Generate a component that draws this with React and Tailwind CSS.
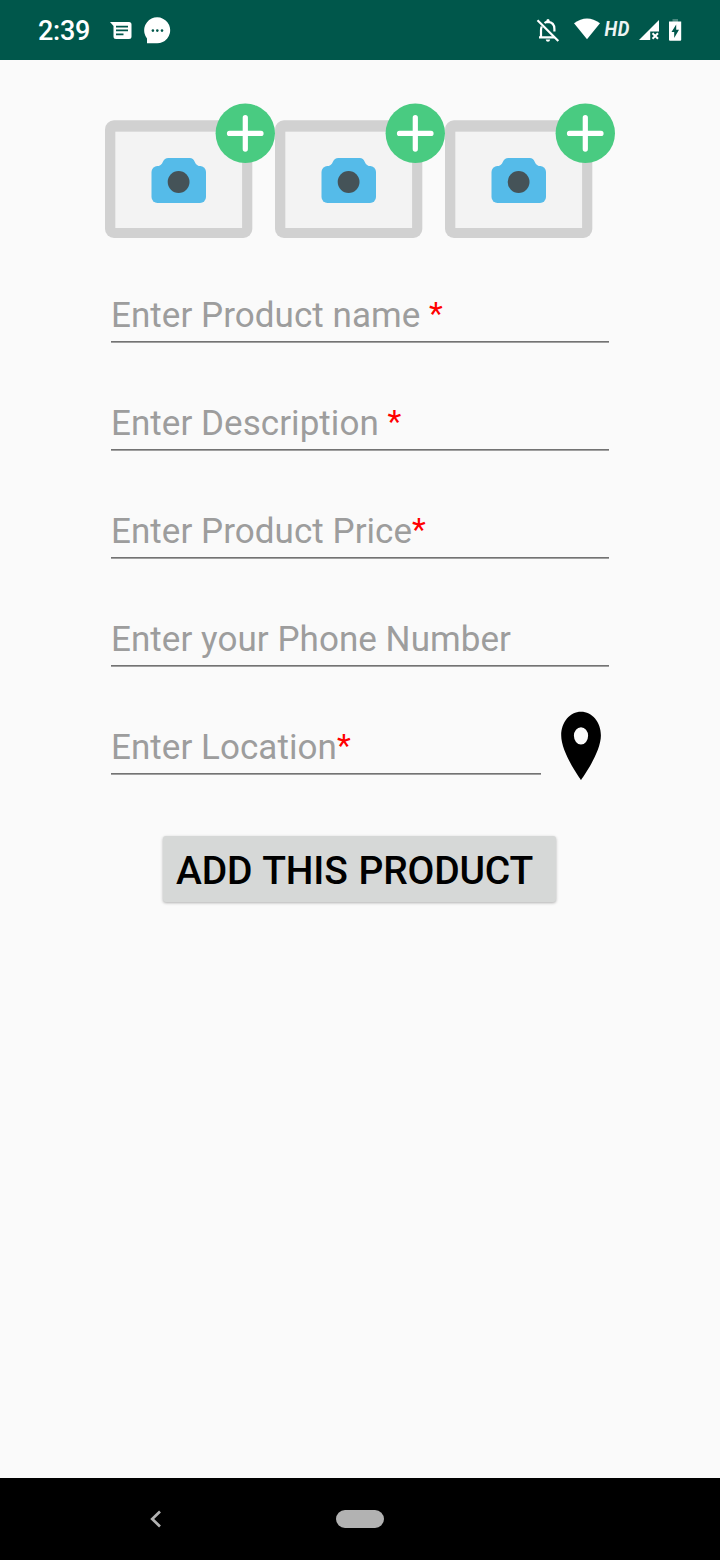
function PhotoSlot() {
  return (
    <button type="button" aria-label="Add photo" className="block h-[136px] w-[170px]">
      <svg width="170" height="136" viewBox="0 0 170 136">
        <rect x="0" y="17.300" width="147.300" height="117.700" rx="9" fill="#d1d1d1" />
        <rect x="10.300" y="28.700" width="126.800" height="96.300" fill="#f3f3f3" />
        <path
          d="M52 63.300q4.500-.300 6-4.300 1.700-4 5.500-4H85q3.500 0 5 4 1.500 4 6 4.300v2H52Z"
          transform="translate(-.200 0)"
          fill="#55bbe9"
        />
        <rect x="46.500" y="63" width="54.500" height="37" rx="6" fill="#55bbe9" />
        <circle cx="73.600" cy="79" r="10.900" fill="#455358" />
        <circle cx="140.300" cy="30.300" r="29.700" fill="#49cb81" />
        <path d="M124.500 30.400h31.500M140.300 14.500v31.600" stroke="#fff" strokeWidth="5.200" strokeLinecap="round" />
      </svg>
    </button>
  );
}

function Field({ label, required, narrow }) {
  return (
    <div className={`${narrow ? "w-[430px]" : "w-[498px]"} flex h-[108px] shrink-0 flex-col justify-end`}>
      <div className="mb-[3px] h-[44px] whitespace-pre text-[35px] leading-[44px] tracking-[0.050px] text-[#9d9d9d]">
        {label}
        {required && <span className="align-[3px] text-[32px] leading-none text-[#ff0000]">*</span>}
      </div>
      <div className="h-[2px] border-t border-[#737373] bg-[#a0a0a0]" />
    </div>
  );
}

function StatusBar() {
  return (
    <header className="flex h-[60px] shrink-0 items-center bg-[#00574b] pl-[38px] text-white">
      <span className="w-[72px] pt-[2px] text-[27px] font-medium leading-[32px] tracking-[-0.250px]">2:39</span>
      <svg width="22" height="20" viewBox="0 0 22 20" fill="none">
        <path d="M0 2h19q2.500 0 2.500 2.500v12q0 2.500-2.500 2.500H6q-2.500 0-2.500-2.500V6Z" fill="#fff" />
        <path d="M6 6.600h12M6 10.400h12M6 14.300h7.500" stroke="#00574b" strokeWidth="1.800" />
      </svg>
      <svg className="ml-[12px]" width="27" height="27" viewBox="0 0 27 27">
        <path d="M3 26.300V21.400A13 13 0 1 1 13 26.300Z" fill="#fff" />
        <g fill="#00574b">
          <circle cx="8.900" cy="13.600" r="1.300" />
          <circle cx="13.300" cy="13.600" r="1.300" />
          <circle cx="18" cy="13.600" r="1.300" />
        </g>
      </svg>
      <div className="ml-auto flex items-center pr-[38px]">
        <svg width="24" height="26" viewBox="0 0 24 26" fill="none">
          <path
            d="M5.800 9.500Q5 11 5 13v7M3 20.300h15.500M8.500 6q1.500-1.200 3.500-1.200 6.400.4 6.400 7.200v2.500"
            stroke="#fff"
            strokeWidth="2.200"
          />
          <path d="M10.400 5V3.600a1.600 1.600 0 0 1 3.200 0V5ZM9.700 22.500h4.500q-.4 2.200-2.250 2.200T9.700 22.500Z" fill="#fff" />
          <path d="M1.500 3.300 22.300 24" stroke="#fff" strokeWidth="2.200" />
        </svg>
        <svg className="ml-[13px]" width="28" height="24" viewBox="0 0 28 24">
          <path d="M1 5.300Q14-4.500 27 5.300L14 21.200Z" fill="#fff" />
        </svg>
        <span className="w-[38px] origin-left scale-x-[0.880] pb-[2px] pl-[4px] text-[21px] font-bold italic leading-[24px] tracking-[0.600px] text-[#edf3f2]">
          HD
        </span>
        <svg width="21" height="22" viewBox="0 0 21 22" fill="none">
          <path d="M0 21 20 1v11.500h-8.800V21Z" fill="#fff" />
          <path d="m13.500 14.300 5.500 5.500m0-5.500-5.500 5.500" stroke="#fff" strokeWidth="2" />
        </svg>
        <svg className="ml-[9px]" width="13" height="24" viewBox="0 0 13 24">
          <path d="M3.500 1h5.500v3H3.500Z" fill="#4c8980" />
          <path d="M0 3.500h12.200v18.300q0 1-1 1H1q-1 0-1-1Z" fill="#fff" />
          <path d="M7.200 6.500v5.200h2.800L5.200 20v-6H2.500Z" fill="#00574b" />
        </svg>
      </div>
    </header>
  );
}

export default function App() {
  return (
    <div className="flex h-[1560px] w-[720px] flex-col overflow-hidden bg-[#fafafa] font-['Roboto',sans-serif]">
      <StatusBar />
      <main className="flex flex-1 flex-col pt-[43px]">
        <div className="flex pl-[105px]">
          <PhotoSlot />
          <PhotoSlot />
          <PhotoSlot />
        </div>
        <div className="-mt-[4px] flex flex-col pl-[111px]">
          <Field label="Enter Product name " required />
          <Field label="Enter Description " required />
          <Field label="Enter Product Price" required />
          <Field label="Enter your Phone Number" />
          <div className="flex">
            <Field label="Enter Location" required narrow />
            <svg className="ml-[19px] mt-[44px] shrink-0" width="42" height="70" viewBox="0 0 42 70">
              <path
                fillRule="evenodd"
                d="M21 .8C10 .8 1.200 11 1.200 24.500 1.200 42 21 69 21 69S40.900 42 40.900 24.500C40.900 11 32 .8 21 .8Zm0 15.400a7.100 8.600 0 1 1 0 17.200 7.100 8.600 0 0 1 0-17.200Z"
              />
            </svg>
          </div>
        </div>
        <button
          type="button"
          className="ml-[163px] mt-[55px] h-[66px] w-[393px] rounded-[3px] bg-[#d6d8d7] pl-[13px] pt-[2px] text-left text-[39px] font-medium leading-[66px] tracking-[-0.200px] text-black shadow-[0_1px_3px_rgba(0,0,0,0.3)] [word-spacing:1.500px]"
        >
          ADD THIS PRODUCT
        </button>
      </main>
      <nav className="flex h-[82px] shrink-0 items-center bg-black pl-[149px]">
        <svg width="14" height="20" viewBox="0 0 14 20" fill="none">
          <path d="M11 2.500 3.200 10 11 17.500" stroke="#b2b2b2" strokeWidth="2.700" />
        </svg>
        <div className="ml-[173px] h-[18px] w-[48px] rounded-full bg-[#b2b2b2]" />
      </nav>
    </div>
  );
}
